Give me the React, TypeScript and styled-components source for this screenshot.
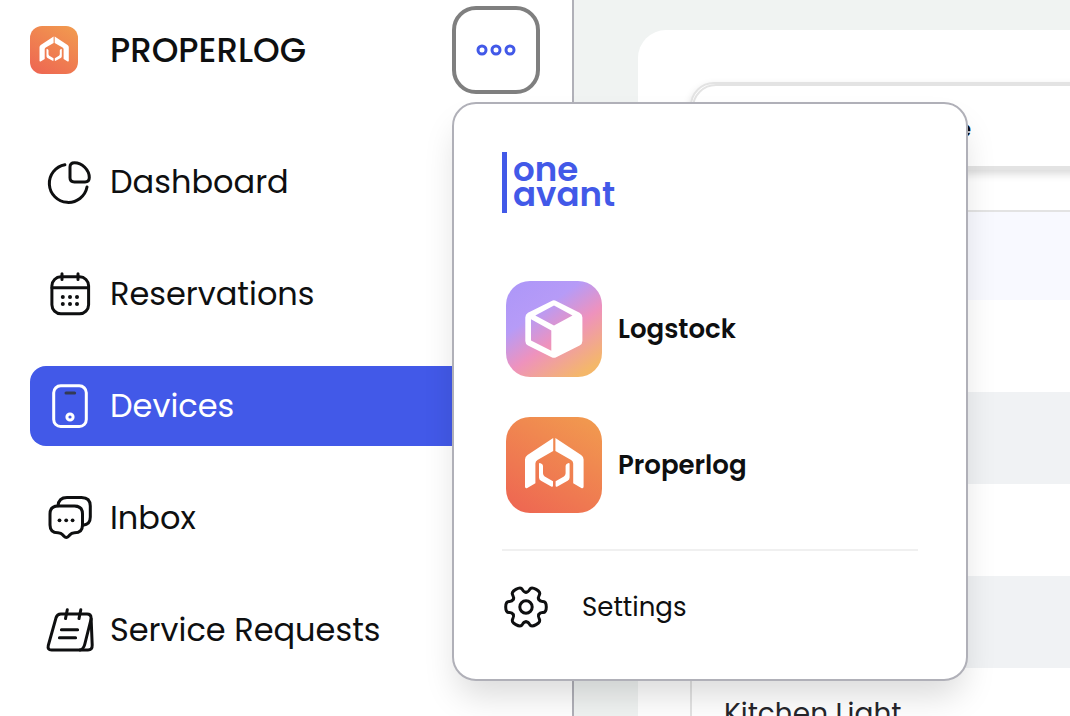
import React from "react";
import styled, { createGlobalStyle, css } from "styled-components";

const color = {
  ink: "#0e0f10",
  brand: "#4259e8",
  line: "#b0b0b8",
  soft: "#e3e3e3",
  page: "#f0f3f2",
};

const GlobalStyle = createGlobalStyle`
  *, *::before, *::after { box-sizing: border-box; }
  body {
    margin: 0;
    background: ${color.page};
    color: ${color.ink};
    font-family: Poppins, Inter, "Liberation Sans", sans-serif;
  }
  button { font: inherit; color: inherit; }
  a { color: inherit; text-decoration: none; }
`;

const Layout = styled.div`
  display: flex;
  height: 100vh;
  overflow: hidden;
`;

const Sidebar = styled.aside`
  flex: 0 0 574px;
  padding: 6px 32px 0 30px;
  background: #fff;
  border-right: 2px solid ${color.line};
`;

const SidebarHeader = styled.header`
  display: flex;
  align-items: center;
  gap: 32px;
  margin-bottom: 48px;
`;

const BrandName = styled.h1`
  flex: 1;
  margin: 0;
  font-size: 34px;
  font-weight: 500;
  line-height: 48px;
`;

const MenuAnchor = styled.div`
  position: relative;
`;

const MenuButton = styled.button`
  display: grid;
  place-items: center;
  width: 88px;
  height: 88px;
  padding: 0;
  background: #fff;
  border: 4px solid #7f7f7f;
  border-radius: 24px;
  color: ${color.brand};
`;

const Popover = styled.div`
  position: absolute;
  z-index: 2;
  top: calc(100% + 8px);
  left: 0;
  width: 516px;
  padding: 48px;
  background: #fff;
  border: 2px solid ${color.line};
  border-radius: 24px;
  box-shadow: 0 20px 34px -6px rgba(0, 0, 0, 0.15);
`;

const Wordmark = styled.div`
  width: max-content;
  margin-bottom: 68px;
  padding: 5px 0 6px 6px;
  border-left: 5px solid ${color.brand};
  color: ${color.brand};
  font-size: 34px;
  font-weight: 600;
  line-height: 25px;

  span { display: block; }
`;

const AppList = styled.div`
  display: flex;
  flex-direction: column;
  gap: 40px;
  padding: 0 4px;
`;

const AppLink = styled.a`
  display: flex;
  align-items: center;
  gap: 16px;
  font-size: 26px;
  font-weight: 600;
`;

const Divider = styled.hr`
  height: 2px;
  margin: 36px 0 32px;
  border: 0;
  background: #f0f0f0;
`;

const SettingsLink = styled.a`
  display: flex;
  align-items: center;
  gap: 32px;
  font-size: 26px;
  line-height: 48px;
`;

const Nav = styled.nav`
  display: flex;
  flex-direction: column;
  gap: 32px;
`;

const NavItem = styled.a<{ $active?: boolean }>`
  display: flex;
  align-items: center;
  gap: 16px;
  height: 80px;
  padding: 0 16px;
  border-radius: 16px;
  font-size: 32px;
  ${(p) => p.$active && css`
    background: ${color.brand};
    color: #fff;
  `}
`;

const Icon = styled.svg`
  flex: none;
  width: 48px;
  height: 48px;
  fill: none;
  stroke: currentColor;
  stroke-width: 3;
  stroke-linecap: round;
  stroke-linejoin: round;

  .dot { fill: currentColor; stroke: none; }
`;

const Main = styled.main`
  flex: 1;
  min-width: 0;
  padding: 30px 0 0 64px;
`;

const Card = styled.section`
  min-width: 640px;
  min-height: 100%;
  padding: 52px;
  background: #fff;
  border-radius: 28px;
`;

const FilterFrame = styled.div`
  margin-bottom: 40px;
  background: #fff;
  border: 2px solid ${color.soft};
  border-radius: 24px;
  box-shadow: 0 4px 8px rgba(0, 0, 0, 0.15);
`;

const FilterBar = styled.div`
  display: flex;
  align-items: center;
  height: 84px;
  padding-top: 6px;
  border: 2px solid ${color.soft};
  border-radius: 24px;
`;

const FilterLabel = styled.span`
  flex: 0 0 277px;
  text-align: right;
  font-size: 22px;
  font-weight: 600;
`;

const Table = styled.table`
  width: 100%;
  border: 2px solid ${color.soft};
  border-collapse: separate;
  border-spacing: 0;

  th { height: 88px; padding: 0; background: #f8f9ff; }
  td { height: 92px; padding: 0 32px; font-size: 28px; color: #26262b; }
  tbody tr:nth-child(even) { background: #f0f2f4; }
`;

const Dots = () => (
  <Icon viewBox="0 0 48 48" aria-hidden>
    <circle cx="10" cy="24" r="4" />
    <circle cx="24" cy="24" r="4" />
    <circle cx="38" cy="24" r="4" />
  </Icon>
);

const ChartIcon = () => (
  <Icon viewBox="0 0 48 48" aria-hidden>
    <path d="M18.9 6.7A19 19 0 1 0 41 29" />
    <path d="M24 9Q24 4.7 28.5 4.7C36 4.7 43.3 12 43.3 19.6Q43.3 24 39 24H28.4Q24 24 24 19.8Z" />
  </Icon>
);

const CalendarIcon = () => (
  <Icon viewBox="0 0 48 48" aria-hidden>
    <rect x="5.9" y="6.8" width="36.7" height="37" rx="9" />
    <path d="M6 17.7H42.6M16 3.8V9.6M32 3.8V9.6" />
    {[27, 34].map((y) => [16.8, 24, 31].map((x) => <circle key={`${x}-${y}`} className="dot" cx={x} cy={y} r="2" />))}
  </Icon>
);

const DeviceIcon = () => (
  <Icon viewBox="0 0 48 48" aria-hidden>
    <rect x="7.7" y="3.8" width="32.6" height="40.7" rx="7" />
    <path d="M20 11H28.6" stroke="#333a55" />
    <circle cx="24" cy="35" r="3.1" />
  </Icon>
);

const InboxIcon = () => (
  <Icon viewBox="0 0 48 48" aria-hidden>
    <path d="M12 12H28.5Q36.5 12 36.5 20V31Q36.5 38.8 28.5 38.8C24.5 38.8 24.6 40.2 22.6 42.3Q20.3 44.8 18 42.3C16 40.2 16 38.8 12 38.8Q4 38.8 4 31V20Q4 12 12 12Z" />
    <path d="M12 11.8Q12.6 3.4 21 3.4H35.5Q44.3 3.4 44.3 12V23Q44.3 30.6 37 31.2" />
    {[13.5, 20.2, 26.6].map((x) => <circle key={x} className="dot" cx={x} cy="26.3" r="1.9" />)}
  </Icon>
);

const NotesIcon = () => (
  <Icon viewBox="0 0 48 48" aria-hidden>
    <path d="M14.8 8H41Q45 8 45.1 12L46.2 39Q46.4 44 42 44H5.6Q1.2 44 2.3 39.4L10 11.8Q11.2 8 14.8 8Z" />
    <path d="M45.1 13L38.7 38.5Q37.4 43.4 34 44M21.3 3.8L19.5 12.6M34.8 3.8L33 12.6M15.4 23.7H31.6M13.4 31.7H29.6" />
  </Icon>
);

const gearLobe = "M12.8 -7.4C14 -5.3 15.6 -5.6 17 -5.6C19.5 -5.6 20.3 -3 20.3 0C20.3 3 19.5 5.6 17 5.6C15.6 5.6 14 5.3 12.8 7.4";

const GearIcon = () => (
  <Icon viewBox="-24 -24 48 48" aria-hidden>
    {[0, 60, 120, 180, 240, 300].map((a) => <path key={a} d={gearLobe} transform={`rotate(${a})`} />)}
    <circle r="6.2" />
  </Icon>
);

const ProperlogLogo = ({ size, id }: { size: number; id: string }) => (
  <svg width={size} height={size} viewBox="0 0 96 96" aria-hidden>
    <defs>
      <linearGradient id={id} x1="0.2" y1="1" x2="0.8" y2="0">
        <stop offset="0" stopColor="#ee6852" />
        <stop offset="1" stopColor="#f1984f" />
      </linearGradient>
      <g id={`${id}-half`}>
        <path d="M47.2 21V34L31.5 43Q29.4 44.2 29.4 46.5V66.2L21.3 70.9Q19 71.8 19 69.5V42.5Q19 39.6 21.5 38Z" />
        <path d="M33 47Q33 45.4 34.5 46.2L36 47.1Q37 47.8 37 49.2V56.2Q37 58.2 38.7 59.4L47 64.3V68.5Q47 70.4 45.2 69.5L35 63.8Q33 62.6 33 60.4Z" />
      </g>
    </defs>
    <rect width="96" height="96" rx="24" fill={`url(#${id})`} />
    <g fill="#fff">
      <use href={`#${id}-half`} />
      <use href={`#${id}-half`} transform="translate(96.6 0) scale(-1 1)" />
    </g>
  </svg>
);

const LogstockLogo = () => (
  <svg width="96" height="96" viewBox="0 0 96 96" aria-hidden>
    <defs>
      <linearGradient id="logstock" x1="0.15" y1="0" x2="0.85" y2="1">
        <stop offset="0" stopColor="#ae97f8" />
        <stop offset="0.3" stopColor="#b69bf7" />
        <stop offset="0.58" stopColor="#ee92bd" />
        <stop offset="0.95" stopColor="#f4b76a" />
      </linearGradient>
    </defs>
    <rect width="96" height="96" rx="24" fill="url(#logstock)" />
    <path
      fill="#fff"
      fillRule="evenodd"
      d="M45.6 19.9Q47.9 18.7 50.2 19.9L73.6 31.8Q76.4 33.3 76.4 36.4V60Q76.4 63 73.6 64.6L50.2 76.2Q47.9 77.4 45.6 76.2L22 64.6Q19.3 63 19.3 60V36.4Q19.3 33.3 22 31.8ZM48 24.6L29.3 34.4L48 44.4L66.5 34.4ZM25 38.2V59.4L45.3 69.7V49.4Z"
    />
  </svg>
);

const navItems = [
  { label: "Dashboard", icon: <ChartIcon /> },
  { label: "Reservations", icon: <CalendarIcon /> },
  { label: "Devices", icon: <DeviceIcon />, active: true },
  { label: "Inbox", icon: <InboxIcon /> },
  { label: "Service Requests", icon: <NotesIcon /> },
];

const rows = ["", "", "", "", "Kitchen Light"];

export default function App() {
  return (
    <>
      <GlobalStyle />
      <Layout>
        <Sidebar>
          <SidebarHeader>
            <ProperlogLogo size={48} id="brand" />
            <BrandName>PROPERLOG</BrandName>
            <MenuAnchor>
              <MenuButton type="button" aria-label="Switch app" aria-expanded="true">
                <Dots />
              </MenuButton>
              <Popover>
                <Wordmark>
                  <span>one</span>
                  <span>avant</span>
                </Wordmark>
                <AppList>
                  <AppLink href="#logstock">
                    <LogstockLogo />
                    Logstock
                  </AppLink>
                  <AppLink href="#properlog">
                    <ProperlogLogo size={96} id="properlog" />
                    Properlog
                  </AppLink>
                </AppList>
                <Divider />
                <SettingsLink href="#settings">
                  <GearIcon />
                  Settings
                </SettingsLink>
              </Popover>
            </MenuAnchor>
          </SidebarHeader>
          <Nav>
            {navItems.map((item) => (
              <NavItem key={item.label} href="#" $active={item.active} aria-current={item.active ? "page" : undefined}>
                {item.icon}
                {item.label}
              </NavItem>
            ))}
          </Nav>
        </Sidebar>
        <Main>
          <Card>
            <FilterFrame>
              <FilterBar>
                <FilterLabel>Name</FilterLabel>
              </FilterBar>
            </FilterFrame>
            <Table>
              <thead>
                <tr>
                  <th scope="col" aria-label="Device" />
                </tr>
              </thead>
              <tbody>
                {rows.map((name, i) => (
                  <tr key={i}>
                    <td>{name}</td>
                  </tr>
                ))}
              </tbody>
            </Table>
          </Card>
        </Main>
      </Layout>
    </>
  );
}
